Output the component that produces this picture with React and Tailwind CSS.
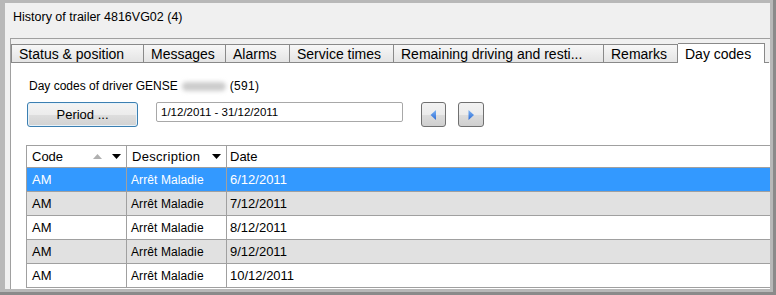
import React from 'react'

const tabs = [
    { label: 'Status & position', w: 'w-[133px]' },
    { label: 'Messages', w: 'w-[82px]' },
    { label: 'Alarms', w: 'w-[64px]' },
    { label: 'Service times', w: 'w-[104px]' },
    { label: 'Remaining driving and resti...', w: 'w-[210px]' },
    { label: 'Remarks', w: 'w-[74px]' },
]

const rows = [
    { code: 'AM', desc: 'Arrêt Maladie', date: '6/12/2011', bg: 'bg-[#3399ff] text-white' },
    { code: 'AM', desc: 'Arrêt Maladie', date: '7/12/2011', bg: 'bg-[#e1e1e1]' },
    { code: 'AM', desc: 'Arrêt Maladie', date: '8/12/2011', bg: 'bg-white' },
    { code: 'AM', desc: 'Arrêt Maladie', date: '9/12/2011', bg: 'bg-[#e1e1e1]' },
    { code: 'AM', desc: 'Arrêt Maladie', date: '10/12/2011', bg: 'bg-white' },
]

function Arrow({ dir }) {
    const pts = dir === 'left' ? '6,0 6,10 0.5,5' : '0.5,0 0.5,10 6,5'
    return (
        <svg width="7" height="10" viewBox="0 0 7 10">
            <defs>
                <linearGradient id={'g' + dir} x1="0" y1="0" x2="0" y2="1">
                    <stop offset="0" stopColor="#7eb4f4" />
                    <stop offset="1" stopColor="#2a6ad4" />
                </linearGradient>
            </defs>
            <polygon points={pts} fill={'url(#g' + dir + ')'} />
        </svg>
    )
}

function Down({ color = '#000' }) {
    return (
        <svg width="9" height="5" viewBox="0 0 9 5">
            <polygon points="0,0 9,0 4.5,5" fill={color} />
        </svg>
    )
}

function Up() {
    return (
        <svg width="9" height="5" viewBox="0 0 9 5">
            <polygon points="0,5 9,5 4.5,0" fill="#b0b0b0" />
        </svg>
    )
}

export default function App() {
    return (
        <div className="w-[776px] h-[295px] overflow-hidden bg-[#8a8a8a] pr-[3px] pb-[3px] flex font-['Liberation_Sans',Arial,sans-serif] text-[13px] text-black">
            <div className="flex-1 flex bg-[#b8b8b8] pl-[5px] pt-[3px] pr-[3px] pb-[3px]">
                <div className="flex-1 flex flex-col bg-[#f0f0f0] min-h-0">
                    {/* Title */}
                    <div className="h-[35px] pl-[8px] pt-[7px] leading-[14px] text-[12.5px]">History of trailer 4816VG02 (4)</div>

                    {/* Tab box */}
                    <div className="ml-[5px] flex-1 flex flex-col min-h-0 border-t border-l border-[#a0a0a0] pt-[4px]">
                        <div className="h-[20px] flex items-end text-[14px] leading-[18px]">
                            {tabs.map((t, i) => (
                                <div
                                    key={i}
                                    className={`${t.w} h-[19px] shrink-0 pl-[7px] whitespace-nowrap overflow-hidden border-t border-r border-b border-[#898989] ${i === 0 ? 'border-l' : ''} bg-[linear-gradient(#f7f7f7,#e4e4e4)]`}
                                >
                                    {t.label}
                                </div>
                            ))}
                            <div className="w-[87px] h-[20px] shrink-0 pl-[7px] whitespace-nowrap border-t border-r border-[#898989] bg-white leading-[20px]">
                                Day codes
                            </div>
                            <div className="w-[4px] h-px bg-[#898989]" />
                        </div>

                        {/* Tab page */}
                        <div className="flex-1 min-h-0 bg-white pl-[15px] pt-[16px] overflow-hidden">
                            <div className="ml-[3px] leading-[14px] flex items-center text-[12px]">
                                <span>Day codes of driver GENSE</span>
                                <span className="ml-[4px] w-[44px] h-[9px] rounded-full bg-[#cccccc] blur-[2px]" />
                                <span className="ml-[4px] tracking-[0.3px]">(591)</span>
                            </div>

                            <div className="mt-[9px] ml-[1px] flex items-start">
                                <button className="w-[111px] h-[25px] rounded-[3px] border border-[#3c7fb1] bg-[linear-gradient(#f4f4f4,#ececec_50%,#dedede_50%,#d2d2d2)] shadow-[inset_0_0_0_1px_#e6f2fa] text-[13px]">
                                    Period ...
                                </button>
                                <div className="ml-[18px] w-[247px] h-[20px] rounded-[2px] border border-[#a8a8a8] pl-[4px] leading-[18px] text-[11.5px]">
                                    1/12/2011 - 31/12/2011
                                </div>
                                <button className="ml-[18px] w-[25px] h-[25px] rounded-[3px] border border-[#707070] bg-[linear-gradient(#f2f2f2,#ebebeb_50%,#dddddd_50%,#cfcfcf)] flex items-center justify-center">
                                    <Arrow dir="left" />
                                </button>
                                <button className="ml-[12px] w-[26px] h-[25px] rounded-[3px] border border-[#707070] bg-[linear-gradient(#f2f2f2,#ebebeb_50%,#dddddd_50%,#cfcfcf)] flex items-center justify-center">
                                    <Arrow dir="right" />
                                </button>
                            </div>

                            {/* Grid */}
                            <div className="mt-[18px] border-t border-l border-[#a0a0a0]">
                                <div className="grid grid-cols-[100px_100px_1fr] h-[22px] border-b border-[#a0a0a0] bg-white">
                                    <div className="border-r border-[#a0a0a0] pl-[5px] pr-[5px] flex items-center">
                                        <span className="flex-1">Code</span>
                                        <Up />
                                        <span className="ml-[10px]"><Down /></span>
                                    </div>
                                    <div className="border-r border-[#a0a0a0] pl-[5px] pr-[5px] flex items-center">
                                        <span className="flex-1 tracking-[0.3px]">Description</span>
                                        <Down />
                                    </div>
                                    <div className="pl-[3px] flex items-center">Date</div>
                                </div>
                                {rows.map((r, i) => (
                                    <div key={i} className={`grid grid-cols-[100px_100px_1fr] h-[24px] border-b border-[#a0a0a0] ${r.bg}`}>
                                        <div className="border-r border-[#a0a0a0] pl-[5px] flex items-center">{r.code}</div>
                                        <div className="border-r border-[#a0a0a0] pl-[4px] flex items-center text-[12px] tracking-[0.1px]">{r.desc}</div>
                                        <div className="pl-[3px] flex items-center">{r.date}</div>
                                    </div>
                                ))}
                            </div>
                        </div>
                    </div>
                </div>
            </div>
        </div>
    )
}
